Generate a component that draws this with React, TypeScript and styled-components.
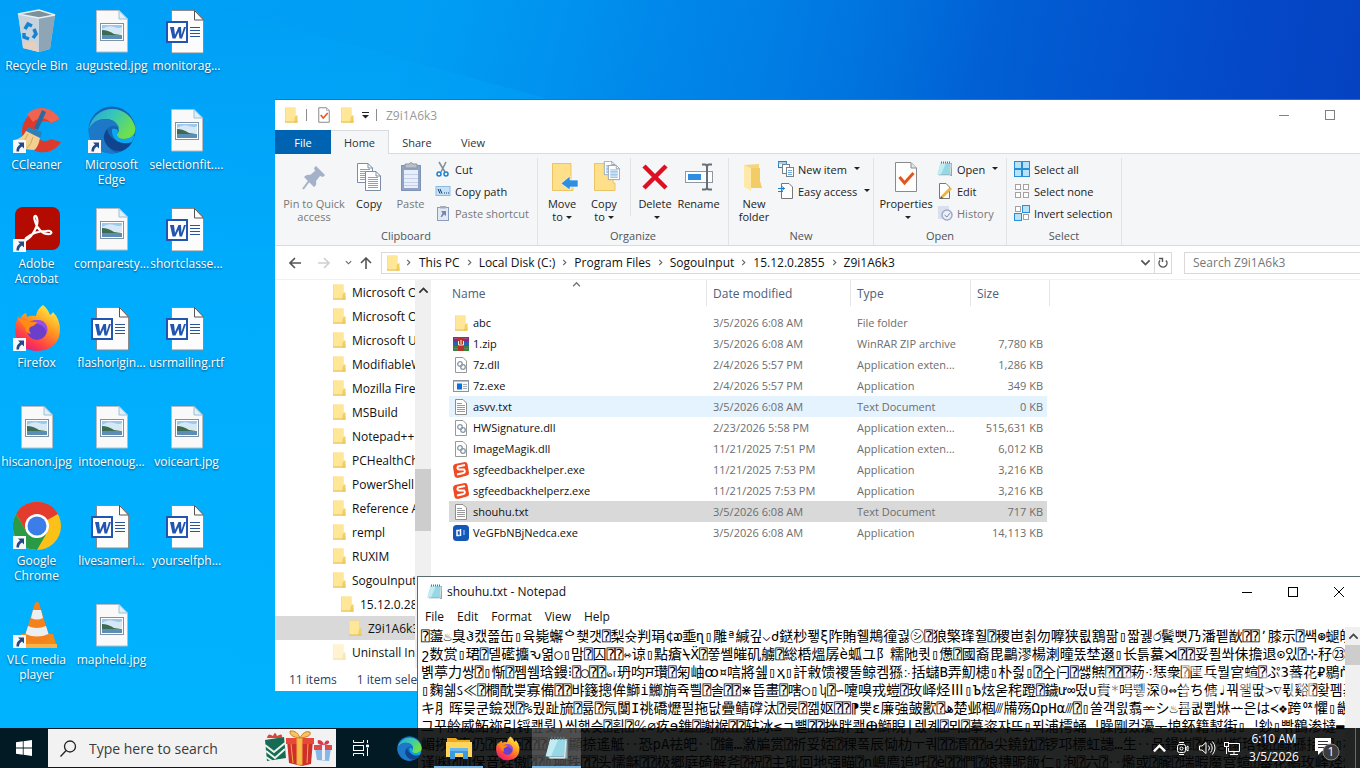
import React from "react";
import styled, { createGlobalStyle, css } from "styled-components";

const GlobalStyle = createGlobalStyle`
  * { box-sizing: border-box; }
  html, body { margin: 0; height: 100%; }
  body {
    font-family: "Open Sans", "Noto Sans", "Segoe UI", sans-serif;
    font-size: 12px;
    color: #1a1a1a;
    overflow: hidden;
  }
  button, input, textarea { font: inherit; color: inherit; }
  button { border: 0; background: none; padding: 0; }
  svg { display: block; flex: none; }
`;

/* ---------- Desktop ---------- */

const Desktop = styled.main`
  position: relative;
  height: 100vh;
  overflow: hidden;
  background:
    linear-gradient(105deg, rgba(0, 160, 248, 1) 0%, rgba(0, 160, 245, 0.95) 26%, rgba(0, 138, 236, 0.7) 44%, rgba(0, 110, 220, 0) 64%),
    linear-gradient(100deg, #0090ea 30%, #0068d8 60%, #0448c8 84%, #063cba 100%);

  &::before {
    content: "";
    position: absolute;
    inset: 0;
    background: linear-gradient(180deg, rgba(0, 168, 252, 0) 0%, rgba(0, 176, 255, 0.8) 40%, rgba(0, 180, 255, 1) 100%);
    clip-path: polygon(0 0, 206px 5px, 545px 98px, 545px 100%, 0 100%);
  }
`;

const IconGrid = styled.div`
  position: relative;
  display: grid;
  grid-auto-flow: column;
  grid-template-rows: repeat(7, 99px);
  grid-auto-columns: 75px;
  width: max-content;
  margin-left: -1px;
`;

const Shortcut = styled.button`
  display: flex;
  flex-direction: column;
  align-items: center;
  justify-content: flex-start;
  padding-top: 7px;
  color: #fff;
  line-height: 15px;
  text-shadow: 0 1px 2px rgba(0, 30, 60, 0.7);
`;

const Glyph = styled.span`
  display: block;
  position: relative;
  height: 51px;
`;

const LinkBadge = styled.svg`
  position: absolute;
  left: 0;
  bottom: 4px;
`;

function PictureFile() {
  return (
    <svg width="48" height="48" viewBox="0 0 48 48">
      <path d="M8.500 3.500H31L39.500 12V45H8.500Z" fill="#f9f9f9" stroke="#b6bcc2" />
      <path d="M31 3.500V12H39.500Z" fill="#dff0fb" stroke="#9cc0d4" />
      <rect x="12.500" y="16.500" width="23" height="17" fill="#fff" stroke="#7d93a5" />
      <path d="M14 18H34V26H14Z" fill="#9cc8ee" />
      <path d="M14 22Q20 18 26 20T34 20V27H14Z" fill="#d5e8f6" />
      <path d="M14 23Q20 23 26 27L34 28V29H14Z" fill="#3c6b52" />
      <path d="M14 28H34V32H14Z" fill="#5c8db5" />
    </svg>
  );
}

function WordFile() {
  return (
    <svg width="48" height="48" viewBox="0 0 48 48">
      <path d="M8.500 3.500H32L40.500 12.500V46H8.500Z" fill="#fcfcfc" stroke="#8a8a8a" />
      <path d="M31.500 3.500V13H40.500Z" fill="#fff" stroke="#555" />
      <path d="M27 20.500H37M27 23.500H37M27 26.500H37M27 29.500H37" stroke="#2b579a" />
      <rect x="4" y="15" width="20" height="20" fill="#fff" stroke="#2155b0" strokeWidth="2" />
      <path d="M7 20H11L12 28L15.500 20H18L18.500 28L21 20H23L19 31.500H16.500L15.500 25L12.500 31.500H9.500Z" fill="#2155b0" />
    </svg>
  );
}

function RecycleBin() {
  return (
    <svg width="48" height="48" viewBox="0 0 48 48">
      <path d="M5 7L26 3L42 8L37 42L26 45L10 41Z" fill="#b9c7d2" />
      <path d="M5 7L26 11L26 45L10 41Z" fill="#c6d3dc" />
      <path d="M26 11L42 8L37 42L26 45Z" fill="#8ea5b5" />
      <path d="M5 7L26 3L42 8L26 11Z" fill="#7d919d" stroke="#e8eef2" strokeWidth="1.500" />
      <path d="M10 36L22 34L26 45L10 41Z" fill="#eccfb8" opacity=".8" />
      <g fill="none" stroke="#1683d2" strokeWidth="3.500">
        <path d="M12 22L15 17L19 19" />
        <path d="M21 22L23 27L20 31" />
        <path d="M16 32L11 30L11 26" />
      </g>
    </svg>
  );
}

function CCleaner() {
  return (
    <svg width="48" height="48" viewBox="0 0 48 48">
      <path d="M47 13A21 21 0 1 0 48 36L38 33A10 10 0 1 1 38 17Z" fill="#dc3b2c" />
      <path d="M47 13A21 21 0 0 0 14 8L20 16A12 12 0 0 1 38 17Z" fill="#ef6350" />
      <path d="M29 4L33 6L25 24L21 22Z" fill="#2b6a9e" />
      <path d="M15 21L29 26L27 33L12 26Z" fill="#2f7fb8" />
      <path d="M13 25L27 32Q25 42 21 44Q8 44 1 34Q9 33 13 25Z" fill="#f3cf92" />
      <path d="M15 28Q12 36 7 38M20 31Q18 39 14 42" stroke="#d5a75e" fill="none" />
    </svg>
  );
}

function EdgeLogo({ size = 48 }: { size?: number }) {
  return (
    <svg width={size} height={size} viewBox="0 0 48 48">
      <defs>
        <linearGradient id="edgeTop" x1="0" y1="0" x2="1" y2="0.500">
          <stop offset="0" stopColor="#2aa3dc" />
          <stop offset="0.500" stopColor="#36c7b8" />
          <stop offset="1" stopColor="#6fe04c" />
        </linearGradient>
      </defs>
      <circle cx="24" cy="24" r="23.500" fill="#1565b4" />
      <path d="M1 23A23.500 23.500 0 0 1 47.500 23Q47 33 36 33Q28 33 29 28Q32 25 30 20Q26 12 16 13Q6 14 1 23Z" fill="url(#edgeTop)" />
      <path d="M1 23Q6 13 16 13Q28 13 31 22Q24 17 19 23Q14 30 17 36Q20 43 28 47Q16 49 8 41Q0 33 1 23Z" fill="#1d78c8" />
      <path d="M19 23Q14 30 17 36Q22 46 34 45Q41 42 44 36Q46 33 42 35Q34 39 27 34Q20 30 19 23Z" fill="#10458d" />
      <path d="M29 28Q28 33 36 33Q42 33 45 29L46.500 30L44 36Q36 39 29 35Q23 30 24 23Q29 22 30 25Q30 27 29 28Z" fill="#0aa8f4" />
    </svg>
  );
}

function Acrobat() {
  return (
    <svg width="48" height="48" viewBox="0 0 48 48">
      <rect x="2" y="2" width="45" height="43" rx="8" fill="#b30b00" />
      <path
        d="M13 35C20 31 26 20 24 13C23 9 20 11 22 16C24 24 30 30 37 29C40 28 38 25 33 26C26 26 18 29 13 33C11 36 12 37 13 35Z"
        fill="none"
        stroke="#fff"
        strokeWidth="2.200"
      />
    </svg>
  );
}

function FirefoxLogo({ size = 48 }: { size?: number }) {
  return (
    <svg width={size} height={size} viewBox="0 0 48 48">
      <defs>
        <linearGradient id="foxBody" x1="0.800" y1="0" x2="0.200" y2="1">
          <stop offset="0" stopColor="#fff24a" />
          <stop offset="0.400" stopColor="#ff9a1f" />
          <stop offset="0.750" stopColor="#ff3f47" />
          <stop offset="1" stopColor="#e31587" />
        </linearGradient>
      </defs>
      <path d="M30 1Q35 5 37 11Q40 9 40 8Q47 15 47 26Q46 46 24 47Q3 46 2 26Q2 18 6 12L7 15Q9 10 13 9L14 13Q18 11 23 12Q24 5 30 1Z" fill="url(#foxBody)" />
      <circle cx="24" cy="26" r="10" fill="#6b3fc9" />
      <path d="M14 20Q20 14 30 17Q36 22 34 29Q32 22 25 20Q19 20 14 27Q13 23 14 20Z" fill="#9b4de8" />
      <path d="M5 15Q12 15 16 18H24Q22 22 17 23Q15 26 18 30Q12 29 12 24Q9 19 5 15Z" fill="#ff8a16" />
    </svg>
  );
}

function ChromeLogo() {
  return (
    <svg width="48" height="48" viewBox="0 0 48 48">
      <circle cx="24" cy="24" r="24" fill="#fbc116" />
      <path d="M24 24L3.200 12A24 24 0 0 1 44.800 12Z" fill="#e33b2e" />
      <path d="M24 12H44.800A24 24 0 0 0 3.200 12L13.600 30Z" fill="#e33b2e" />
      <path d="M3.200 12L13.600 30Q18 36 24 36L34.400 30L24 48A24 24 0 0 1 3.200 12Z" fill="#2b9a47" />
      <circle cx="24" cy="24" r="12" fill="#fff" />
      <circle cx="24" cy="24" r="9.500" fill="#3b7de9" />
    </svg>
  );
}

function VlcCone() {
  return (
    <svg width="48" height="48" viewBox="0 0 48 48">
      <path d="M8 33H40L44 46H4Z" fill="#f08a1a" />
      <path d="M4 43H44V47H4Z" fill="#fbb04a" />
      <path d="M22 2Q24 0 26 2L37 38Q24 45 11 38Z" fill="#f5811c" />
      <path d="M20 9H28L30 17Q24 20 18 17Z" fill="#eceff2" />
      <path d="M15 25Q24 29 33 25L35.500 33Q24 38 12.500 33Z" fill="#eceff2" />
    </svg>
  );
}

function ShortcutBadge() {
  return (
    <LinkBadge width="13" height="13" viewBox="0 0 13 13">
      <rect width="13" height="13" fill="#f6f8fa" />
      <path d="M5 2.500H11V8.500L9 6.500Q6 8 6 11.500H3.500Q3 7 7 4.500Z" fill="#234a85" />
    </LinkBadge>
  );
}

type Entry = { name: string; icon: React.ReactNode; linked?: boolean };

const entries: Entry[] = [
  { name: "Recycle Bin", icon: <RecycleBin /> },
  { name: "CCleaner", icon: <CCleaner />, linked: true },
  { name: "Adobe Acrobat", icon: <Acrobat />, linked: true },
  { name: "Firefox", icon: <FirefoxLogo />, linked: true },
  { name: "hiscanon.jpg", icon: <PictureFile /> },
  { name: "Google Chrome", icon: <ChromeLogo />, linked: true },
  { name: "VLC media player", icon: <VlcCone />, linked: true },
  { name: "augusted.jpg", icon: <PictureFile /> },
  { name: "Microsoft Edge", icon: <EdgeLogo />, linked: true },
  { name: "comparesty...", icon: <PictureFile /> },
  { name: "flashorigin...", icon: <WordFile /> },
  { name: "intoenoug...", icon: <PictureFile /> },
  { name: "livesameri...", icon: <WordFile /> },
  { name: "mapheld.jpg", icon: <PictureFile /> },
  { name: "monitorag...", icon: <WordFile /> },
  { name: "selectionfit....", icon: <PictureFile /> },
  { name: "shortclasse...", icon: <WordFile /> },
  { name: "usrmailing.rtf", icon: <WordFile /> },
  { name: "voiceart.jpg", icon: <PictureFile /> },
  { name: "yourselfph...", icon: <WordFile /> },
];

/* ---------- Shared icons ---------- */

function Folder({ size = 16, faded = false }: { size?: number; faded?: boolean }) {
  return (
    <svg width={size} height={size} viewBox="0 0 16 16" opacity={faded ? 0.45 : 1}>
      <path d="M2 0.500H12.500V12H14.500V15.500H2Z" fill="#f8d775" />
      <path d="M2.500 1H12V15H2.500Z" fill="#ffe797" />
      <path d="M12 9.500L14.500 8V15.500H11Z" fill="#f3cf5e" />
      <path d="M2 15H14.500" stroke="#e3bd53" />
    </svg>
  );
}

function NotepadIcon({ size = 16 }: { size?: number }) {
  return (
    <svg width={size} height={size} viewBox="0 0 16 16">
      <path d="M4 2H15V15H3L1.500 13Z" fill="#89a9b2" />
      <path d="M3.500 2H14L12.500 13.500H0.500Z" fill="#97d8e6" />
      <path d="M3.500 2H9L4 13.500H0.500Z" fill="#c3ebf2" />
      <path d="M4 1.500H14" stroke="#55747c" strokeWidth="2" strokeDasharray="1 1" />
      <path d="M14 3L13 14.500H3" stroke="#dfe3e4" fill="none" />
    </svg>
  );
}

/* ---------- Explorer window ---------- */

const Explorer = styled.section`
  position: absolute;
  left: 275px;
  top: 99px;
  right: -39px;
  bottom: 77px;
  display: flex;
  flex-direction: column;
  background: #fff;
  border-top: 1px solid #2277b8;
`;

const TitleRow = styled.header`
  display: flex;
  align-items: center;
  gap: 7px;
  height: 30px;
  padding-left: 8px;
  color: #999;
`;

const Divider = styled.span`
  width: 1px;
  height: 12px;
  margin-right: 2px;
  background: #8d8d8d;
`;

const Caption = styled.h1`
  flex: 1;
  margin: 0;
  font-size: 12px;
  font-weight: 400;
`;

const WindowControls = styled.div`
  display: flex;
`;

const WindowButton = styled.button`
  display: grid;
  place-items: center;
  width: 46px;
  height: 29px;
`;

const TabRow = styled.div`
  display: flex;
  height: 24px;
  border-bottom: 1px solid #dadbdc;
  font-size: 11px;
`;

const Tab = styled.button<{ $kind?: "file" | "active" }>`
  width: 56px;
  height: 24px;
  color: #333;
  ${(p) => p.$kind === "file" && css`color: #fff; background: #0063b1;`}
  ${(p) => p.$kind === "active" && css`
    width: 58px;
    background: #f5f6f7;
    border: solid #dadbdc;
    border-width: 1px 1px 0 0;
  `}
`;

const Ribbon = styled.div`
  display: flex;
  height: 92px;
  padding-top: 4px;
  background: #f5f6f7;
  border-bottom: 1px solid #dadbdc;
  font-size: 11px;
`;

const Group = styled.fieldset<{ $width: number }>`
  width: ${(p) => p.$width}px;
  min-width: 0;
  margin: 0;
  padding: 0;
  border: 0;
  border-right: 1px solid #e2e3e4;
`;

const GroupBody = styled.div<{ $inset?: number }>`
  display: flex;
  height: 70px;
  padding-left: ${(p) => p.$inset ?? 4}px;
`;

const GroupName = styled.div`
  line-height: 16px;
  text-align: center;
  color: #4f5459;
`;

const BigButton = styled.button<{ $width: number; $dim?: boolean }>`
  display: flex;
  flex-direction: column;
  align-items: center;
  justify-content: flex-start;
  gap: 4px;
  width: ${(p) => p.$width}px;
  padding-top: 3px;
  line-height: 13px;
  white-space: nowrap;
  color: ${(p) => (p.$dim ? "#777" : "#222")};
`;

const SmallStack = styled.div`
  display: flex;
  flex-direction: column;
  padding-left: 3px;
`;

const SmallButton = styled.button<{ $dim?: boolean }>`
  display: flex;
  align-items: center;
  gap: 4px;
  height: 22px;
  white-space: nowrap;
  color: ${(p) => (p.$dim ? "#777" : "#222")};
`;

const Rule = styled.span`
  width: 1px;
  height: 58px;
  margin: 0 4px;
  background: #e2e3e4;
`;

const Arrow = styled.span`
  display: inline-block;
  margin: 0 0 2px 3px;
  border: 3px solid transparent;
  border-top-color: currentColor;
  border-bottom: 0;
`;

function PinIcon() {
  return (
    <svg width="32" height="32" viewBox="0 0 32 32">
      <path d="M18 5L27 14L25 16L22 15L18 20Q19 24 16 26L6 16Q9 13 12 14L17 10L16 7Z" fill="#a3b1c9" />
      <path d="M11 20L5 28" stroke="#a3b1c9" strokeWidth="2" />
    </svg>
  );
}
function Sheet({ x, y }: { x: number; y: number }) {
  return (
    <g transform={`translate(${x} ${y})`}>
      <path d="M0.500 0.500H11L15.500 5V19.500H0.500Z" fill="#fff" stroke="#7b8ea5" />
      <path d="M11 0.500V5H15.500" fill="none" stroke="#7b8ea5" />
      <path d="M3 6.500H13M3 8.500H13M3 10.500H13M3 12.500H13M3 14.500H13M3 16.500H13" stroke="#70a9dd" />
    </g>
  );
}
function CopyIcon() {
  return (
    <svg width="32" height="32" viewBox="0 0 32 32">
      <Sheet x={4} y={2} />
      <Sheet x={12} y={10} />
    </svg>
  );
}
function PasteIcon() {
  return (
    <svg width="32" height="32" viewBox="0 0 32 32">
      <rect x="6.500" y="4.500" width="19" height="25" fill="#8fa3c6" stroke="#8193b4" />
      <rect x="9" y="9" width="14" height="18" fill="#e9effa" />
      <path d="M9 13.500H23M9 17.500H23M9 21.500H23M9 24.500H23" stroke="#c3d0e8" />
      <path d="M10 3H14Q16 0 18 3H22V7H10Z" fill="#b9c0c9" stroke="#8d97a5" />
    </svg>
  );
}
function ScissorsIcon() {
  return (
    <svg width="16" height="16" viewBox="0 0 16 16" fill="none">
      <path d="M4 1L10 11M11 1L6 11" stroke="#7f8c99" strokeWidth="1.500" />
      <circle cx="4" cy="13" r="2" stroke="#1c7fd0" strokeWidth="1.500" />
      <circle cx="11" cy="13" r="2" stroke="#1c7fd0" strokeWidth="1.500" />
    </svg>
  );
}
function PathIcon() {
  return (
    <svg width="16" height="16" viewBox="0 0 16 16">
      <rect x="1" y="3.500" width="14" height="9" fill="#c4e1f8" stroke="#8abbe2" />
      <path d="M3 6L5 10.500M5 6L7 10.500M9 10H10M11 10H12M13 10H14" stroke="#17385c" />
    </svg>
  );
}
function PasteShortcutIcon() {
  return (
    <svg width="16" height="16" viewBox="0 0 16 16">
      <rect x="2.500" y="2.500" width="11" height="13" fill="#e3e9f4" stroke="#8a9cbf" />
      <path d="M5 1H11V3.500H5Z" fill="#a3acba" />
      <path d="M6 6H11V11L9 9.500L7 12H5.500L7.500 8Z" fill="#7487ad" />
    </svg>
  );
}
function MoveIcon() {
  return (
    <svg width="32" height="32" viewBox="0 0 32 32">
      <path d="M6.500 2.500H25V22H27V29.500H6.500Z" fill="#ffe08a" stroke="#eac566" />
      <path d="M32 19H24V15L15 22.500L24 29V26H32Z" fill="#2f8ee2" stroke="#fff" strokeWidth=".6" />
    </svg>
  );
}
function CopyToIcon() {
  return (
    <svg width="32" height="32" viewBox="0 0 32 32">
      <path d="M6.500 2.500H25V22H27V29.500H6.500Z" fill="#ffe08a" stroke="#eac566" />
      <g transform="translate(16 0) scale(.7)"><Sheet x={0} y={0} /></g>
      <g transform="translate(20 4) scale(.75)"><Sheet x={0} y={0} /></g>
    </svg>
  );
}
function DeleteIcon() {
  return (
    <svg width="32" height="32" viewBox="0 0 32 32">
      <path d="M5 5L27 27M27 5L5 27" stroke="#dc1022" strokeWidth="4.500" />
    </svg>
  );
}
function RenameIcon() {
  return (
    <svg width="32" height="32" viewBox="0 0 32 32">
      <rect x="2.500" y="10.500" width="27" height="11" fill="#fff" stroke="#8d98a5" />
      <rect x="5" y="13" width="13" height="6" fill="#2f8ee2" />
      <path d="M19 3.500H22Q24 3.500 24 6Q24 3.500 26 3.500H29M24 5V27M19 28.500H22Q24 28.500 24 26Q24 28.500 26 28.500H29" fill="none" stroke="#686e75" strokeWidth="2" />
    </svg>
  );
}
function NewFolderIcon() {
  return (
    <svg width="32" height="32" viewBox="0 0 32 32">
      <path d="M6 4L21 3V25L24 27H10L6 25Z" fill="#f6d67b" />
      <path d="M6 4L13 7V30L6 26Z" fill="#ffe9a9" />
      <path d="M13 7H22V20L24 27H13Z" fill="#f2cc66" />
    </svg>
  );
}
function NewItemIcon() {
  return (
    <svg width="16" height="16" viewBox="0 0 16 16">
      <rect x="0.500" y="0.500" width="8" height="6" fill="#eaf5fd" stroke="#2f7fb8" />
      <path d="M0 2H9" stroke="#5ea8dd" />
      <rect x="4.500" y="3.500" width="7" height="9" fill="#fff" stroke="#76828e" />
      <rect x="8.500" y="6.500" width="7" height="9" fill="#fff" stroke="#76828e" />
      <path d="M10 9.500H14M10 11.500H14M10 13.500H14" stroke="#70a9dd" />
    </svg>
  );
}
function EasyAccessIcon() {
  return (
    <svg width="16" height="16" viewBox="0 0 16 16">
      <path d="M3.500 0.500H11L14.500 4V15.500H3.500Z" fill="#fff" stroke="#777" />
      <path d="M0 5.500H7M4 3.500L6.500 5.500L4 7.500M0 8.500H5" stroke="#1c7fd0" fill="none" />
    </svg>
  );
}
function PropertiesIcon({ size = 32 }: { size?: number }) {
  return (
    <svg width={size} height={size} viewBox="0 0 32 32">
      <path d="M5.500 1.500H21L26.500 7V30.500H5.500Z" fill="#fff" stroke="#8a8a8a" strokeWidth={size < 20 ? 2 : 1} />
      <path d="M21 2V7H26.500" fill="#e5e5e5" stroke="#8a8a8a" />
      <path d="M9.500 16L14.500 22L23.500 12" fill="none" stroke="#e2561c" strokeWidth="3" />
    </svg>
  );
}
function EditIcon() {
  return (
    <svg width="16" height="16" viewBox="0 0 16 16">
      <path d="M2.500 0.500H9L12.500 4V15.500H2.500Z" fill="#fff" stroke="#777" />
      <path d="M4 13L13 4L15 6L6 15Z" fill="#f0b23e" />
      <path d="M4 13L6 15L3 16Z" fill="#555" />
    </svg>
  );
}
function HistoryIcon() {
  return (
    <svg width="16" height="16" viewBox="0 0 16 16">
      <path d="M1 1H12V14H1Z" fill="#dbe0ee" />
      <circle cx="10" cy="10" r="5" fill="#eef1f8" stroke="#9eabc8" strokeWidth="1.500" />
      <path d="M7.500 10L10 12L13 8" fill="none" stroke="#7b8bb0" />
    </svg>
  );
}
function SelectIcon({ filled }: { filled: boolean[] }) {
  const spots = [[0.5, 0.5], [8.5, 0.5], [0.5, 8.5], [8.5, 8.5]];
  return (
    <svg width="16" height="16" viewBox="0 0 16 16">
      {spots.map(([x, y], i) =>
        filled[i] ? (
          <rect key={i} x={x} y={y} width="7" height="7" fill="#b6e2fb" stroke="#2c8ed2" />
        ) : (
          <rect key={i} x={x + 1} y={y + 1} width="5" height="5" fill="#fff" stroke="#a8a0a0" />
        ),
      )}
    </svg>
  );
}

const AddressRow = styled.div`
  display: flex;
  align-items: center;
  height: 33px;
  padding-left: 11px;
`;

const NavButton = styled.button<{ $width: number }>`
  display: grid;
  place-items: center;
  width: ${(p) => p.$width}px;
  height: 22px;
`;

const AddressBox = styled.nav`
  display: flex;
  align-items: center;
  flex: 1;
  height: 22px;
  padding-left: 3px;
  border: 1px solid #d9d9d9;
`;

const Crumb = styled.button`
  padding: 0 6px;
  color: #111;
`;

const RootMark = styled.span`
  padding: 0 1px 0 4px;
`;

const BoxEnd = styled.span`
  display: flex;
  align-items: center;
  gap: 3px;
  margin-left: auto;
  height: 20px;
`;

const RefreshButton = styled.button`
  display: grid;
  place-items: center;
  width: 17px;
  height: 20px;
  border-left: 1px solid #d9d9d9;
`;

const SearchBox = styled.input`
  width: 215px;
  height: 22px;
  margin-left: 12px;
  padding: 0 8px;
  border: 1px solid #d9d9d9;
  border-radius: 0;
  &::placeholder { color: #767676; opacity: 1; }
`;

function Chevron({ size = 7, color = "#666", turn = 0 }: { size?: number; color?: string; turn?: number }) {
  return (
    <svg width={size} height={size} viewBox="0 0 8 8" fill="none">
      <path d="M2.500 1L5.500 4L2.500 7" stroke={color} strokeWidth="1.300" transform={`rotate(${turn} 4 4)`} />
    </svg>
  );
}

const Columns = styled.div`
  display: flex;
  flex: 1;
  min-height: 0;
  border-top: 1px solid #f1f1f1;
`;

const Tree = styled.ul`
  width: 140px;
  margin: 0;
  padding: 0;
  list-style: none;
  overflow: hidden;
`;

const TreeItem = styled.li<{ $depth: number; $selected?: boolean }>`
  display: flex;
  align-items: center;
  gap: 5px;
  height: 24px;
  padding-left: ${(p) => 56 + p.$depth * 8}px;
  white-space: nowrap;
  color: #111;
  background: ${(p) => (p.$selected ? "#d9d9d9" : "transparent")};
`;

const TreeScroll = styled.div`
  display: flex;
  flex-direction: column;
  align-items: center;
  width: 16px;
  padding-top: 5px;
  background: #f0f0f0;
`;

const TreeThumb = styled.span`
  width: 16px;
  height: 62px;
  margin-top: 173px;
  background: #cdcdcd;
`;

const ListPane = styled.div`
  flex: 1;
  padding-left: 18px;
`;

const FileTable = styled.table`
  width: 601px;
  table-layout: fixed;
  border-spacing: 0;
  font-size: 11px;
  color: #6d6d6d;
`;

const HeadCell = styled.th<{ $width: number }>`
  position: relative;
  width: ${(p) => p.$width}px;
  height: 26px;
  padding: 0 0 0 6px;
  border-right: 1px solid #e5e5e5;
  font-size: 12px;
  font-weight: 400;
  text-align: left;
  color: #4c607a;
  &:first-child { padding-left: 3px; }
`;

const SortMark = styled.span`
  position: absolute;
  left: 123px;
  top: 0;
`;

const FileRow = styled.tr<{ $tone?: string }>`
  td {
    height: 21px;
    padding: 0 0 0 6px;
    overflow: hidden;
    white-space: nowrap;
    text-overflow: ellipsis;
    background: ${(p) => p.$tone ?? "transparent"};
    background-clip: padding-box;
  }
  td:first-child { padding-left: 4px; color: #111; }
  td:last-child { padding-right: 4px; border-right: 3px solid transparent; text-align: right; }
`;

const Spacer = styled.tr`
  height: 6px;
  td { padding: 0; }
`;

const FileName = styled.span`
  display: flex;
  align-items: center;
  gap: 4px;
`;

const StatusBar = styled.footer`
  display: flex;
  align-items: center;
  gap: 20px;
  height: 23px;
  padding-left: 14px;
  color: #2a4266;
`;

function FileIcon({ kind }: { kind: string }) {
  if (kind === "folder") return <Folder />;
  if (kind === "zip")
    return (
      <svg width="16" height="16" viewBox="0 0 16 16">
        <rect y="1" width="16" height="5" fill="#8c2a7c" />
        <rect y="6" width="16" height="4" fill="#2e5fae" />
        <rect y="10" width="16" height="5" fill="#2f8a3c" />
        <path d="M1 2.500H15M1 12.500H15" stroke="#bd6a9c" strokeOpacity=".5" />
        <rect x="5" y="1" width="6" height="14" fill="#b5342c" />
        <path d="M5.500 5V9H10.500V5M8 4V8" stroke="#f5edd0" fill="none" />
      </svg>
    );
  if (kind === "dll")
    return (
      <svg width="16" height="16" viewBox="0 0 16 16">
        <path d="M2.500 0.500H10L13.500 4V15.500H2.500Z" fill="#fff" stroke="#999" />
        <circle cx="7" cy="7" r="2.300" fill="none" stroke="#8797a8" strokeWidth="1.300" />
        <circle cx="10" cy="10" r="2.300" fill="none" stroke="#8797a8" strokeWidth="1.300" />
      </svg>
    );
  if (kind === "exe")
    return (
      <svg width="16" height="16" viewBox="0 0 16 16">
        <rect x="0.500" y="2.500" width="15" height="11" fill="#f6f8fa" stroke="#8795a3" />
        <path d="M1 3.500H15" stroke="#b5c2cf" />
        <rect x="4" y="5.500" width="5" height="6" fill="#0a72d6" />
        <path d="M10 6.500H14M10 8.500H14M10 10.500H14" stroke="#a5b0bb" />
      </svg>
    );
  if (kind === "txt")
    return (
      <svg width="16" height="16" viewBox="0 0 16 16">
        <path d="M2.500 0.500H10L13.500 4V15.500H2.500Z" fill="#fff" stroke="#8e8e8e" />
        <path d="M4 4.500H9M4 6.500H12M4 8.500H12M4 10.500H12M4 12.500H12" stroke="#9a9a9a" />
      </svg>
    );
  if (kind === "sogou")
    return (
      <svg width="16" height="16" viewBox="0 0 16 16">
        <path d="M2 2L12 0Q14 0 14.500 2L16 11Q16 13 14 13.500L5 16Q2 16 1.500 14L0 5Q0 3 2 2Z" fill="#f04a22" />
        <path d="M12 3L5 4.500Q3.500 7 6 7.500L11 7.500Q13 10 10.500 11L4 12.500" fill="none" stroke="#fff" strokeWidth="2" />
      </svg>
    );
  return (
    <svg width="16" height="16" viewBox="0 0 16 16">
      <rect width="16" height="16" rx="3.500" fill="#1557b8" />
      <path d="M6.500 5.500H4V10.500H6.500M7.500 4V11" stroke="#fff" strokeWidth="1.500" fill="none" />
      <path d="M11 5V10" stroke="#7fc2ff" strokeWidth="1.300" />
    </svg>
  );
}

const files: [string, string, string, string, string][] = [
  ["folder", "abc", "3/5/2026 6:08 AM", "File folder", ""],
  ["zip", "1.zip", "3/5/2026 6:08 AM", "WinRAR ZIP archive", "7,780 KB"],
  ["dll", "7z.dll", "2/4/2026 5:57 PM", "Application exten...", "1,286 KB"],
  ["exe", "7z.exe", "2/4/2026 5:57 PM", "Application", "349 KB"],
  ["txt", "asvv.txt", "3/5/2026 6:08 AM", "Text Document", "0 KB"],
  ["dll", "HWSignature.dll", "2/23/2026 5:58 PM", "Application exten...", "515,631 KB"],
  ["dll", "ImageMagik.dll", "11/21/2025 7:51 PM", "Application exten...", "6,012 KB"],
  ["sogou", "sgfeedbackhelper.exe", "11/21/2025 7:53 PM", "Application", "3,216 KB"],
  ["sogou", "sgfeedbackhelperz.exe", "11/21/2025 7:53 PM", "Application", "3,216 KB"],
  ["txt", "shouhu.txt", "3/5/2026 6:08 AM", "Text Document", "717 KB"],
  ["app", "VeGFbNBjNedca.exe", "3/5/2026 6:08 AM", "Application", "14,113 KB"],
];
const rowTones: Record<string, string> = { "asvv.txt": "#e5f3ff", "shouhu.txt": "#d9d9d9" };

const treeItems: [string, number][] = [
  ["Microsoft Office", 0],
  ["Microsoft OneDrive", 0],
  ["Microsoft Update", 0],
  ["ModifiableWindowsApps", 0],
  ["Mozilla Firefox", 0],
  ["MSBuild", 0],
  ["Notepad++", 0],
  ["PCHealthCheck", 0],
  ["PowerShell", 0],
  ["Reference Assemblies", 0],
  ["rempl", 0],
  ["RUXIM", 0],
  ["SogouInput", 0],
  ["15.12.0.2855", 1],
  ["Z9i1A6k3", 2],
  ["Uninstall Information", 0],
];

const crumbs = ["This PC", "Local Disk (C:)", "Program Files", "SogouInput", "15.12.0.2855", "Z9i1A6k3"];

function Controls({ color }: { color: string }) {
  return (
    <WindowControls>
      <WindowButton aria-label="Minimize">
        <svg width="10" height="10"><path d="M0 5.500H10" stroke={color} /></svg>
      </WindowButton>
      <WindowButton aria-label="Maximize">
        <svg width="10" height="10"><rect x="0.500" y="0.500" width="9" height="9" fill="none" stroke={color} /></svg>
      </WindowButton>
      <WindowButton aria-label="Close">
        <svg width="10" height="10"><path d="M0 0L10 10M10 0L0 10" stroke={color} /></svg>
      </WindowButton>
    </WindowControls>
  );
}

function ExplorerWindow() {
  return (
    <Explorer aria-label="File Explorer">
      <TitleRow>
        <Folder />
        <Divider />
        <PropertiesIcon size={16} />
        <Folder />
        <svg width="7" height="8" viewBox="0 0 7 8">
          <path d="M0 1.500H7" stroke="#222" />
          <path d="M0 4H7L3.500 7.500Z" fill="#222" />
        </svg>
        <Divider />
        <Caption>Z9i1A6k3</Caption>
        <Controls color="#808080" />
      </TitleRow>
      <TabRow>
        <Tab $kind="file">File</Tab>
        <Tab $kind="active">Home</Tab>
        <Tab>Share</Tab>
        <Tab>View</Tab>
      </TabRow>
      <Ribbon>
        <Group $width={263}>
          <GroupBody>
            <BigButton $width={70} $dim><PinIcon /><span>Pin to Quick<br />access</span></BigButton>
            <BigButton $width={40}><CopyIcon /><span>Copy</span></BigButton>
            <BigButton $width={43} $dim><PasteIcon /><span>Paste</span></BigButton>
            <SmallStack>
              <SmallButton><ScissorsIcon />Cut</SmallButton>
              <SmallButton><PathIcon />Copy path</SmallButton>
              <SmallButton $dim><PasteShortcutIcon />Paste shortcut</SmallButton>
            </SmallStack>
          </GroupBody>
          <GroupName>Clipboard</GroupName>
        </Group>
        <Group $width={191}>
          <GroupBody>
            <BigButton $width={40}><MoveIcon /><span>Move<br />to<Arrow /></span></BigButton>
            <BigButton $width={44}><CopyToIcon /><span>Copy<br />to<Arrow /></span></BigButton>
            <Rule />
            <BigButton $width={40}><DeleteIcon /><span>Delete<br /><Arrow /></span></BigButton>
            <BigButton $width={47}><RenameIcon /><span>Rename</span></BigButton>
          </GroupBody>
          <GroupName>Organize</GroupName>
        </Group>
        <Group $width={145}>
          <GroupBody>
            <BigButton $width={42}><NewFolderIcon /><span>New<br />folder</span></BigButton>
            <SmallStack>
              <SmallButton><NewItemIcon />New item<Arrow /></SmallButton>
              <SmallButton><EasyAccessIcon />Easy access<Arrow /></SmallButton>
            </SmallStack>
          </GroupBody>
          <GroupName>New</GroupName>
        </Group>
        <Group $width={133}>
          <GroupBody>
            <BigButton $width={56}><PropertiesIcon /><span>Properties<br /><Arrow /></span></BigButton>
            <SmallStack>
              <SmallButton><NotepadIcon />Open<Arrow /></SmallButton>
              <SmallButton><EditIcon />Edit</SmallButton>
              <SmallButton $dim><HistoryIcon />History</SmallButton>
            </SmallStack>
          </GroupBody>
          <GroupName>Open</GroupName>
        </Group>
        <Group $width={115}>
          <GroupBody>
            <SmallStack>
              <SmallButton><SelectIcon filled={[true, true, true, true]} />Select all</SmallButton>
              <SmallButton><SelectIcon filled={[false, false, false, false]} />Select none</SmallButton>
              <SmallButton><SelectIcon filled={[false, true, true, false]} />Invert selection</SmallButton>
            </SmallStack>
          </GroupBody>
          <GroupName>Select</GroupName>
        </Group>
      </Ribbon>
      <AddressRow>
        <NavButton $width={17} aria-label="Back">
          <svg width="12" height="12" fill="none" stroke="#555" strokeWidth="1.600"><path d="M12 6H1M6 1L1 6L6 11" /></svg>
        </NavButton>
        <NavButton $width={42} aria-label="Forward">
          <svg width="12" height="12" fill="none" stroke="#d0d0d0" strokeWidth="1.600"><path d="M0 6H11M6 1L11 6L6 11" /></svg>
        </NavButton>
        <NavButton $width={6} aria-label="Recent locations"><Chevron turn={90} /></NavButton>
        <NavButton $width={30} aria-label="Up">
          <svg width="12" height="12" fill="none" stroke="#555" strokeWidth="1.600"><path d="M6 12V1M1 6L6 1L11 6" /></svg>
        </NavButton>
        <AddressBox aria-label="Address">
          <Folder />
          <RootMark><Chevron /></RootMark>
          {crumbs.map((crumb, i) => (
            <React.Fragment key={crumb}>
              {i > 0 && <Chevron />}
              <Crumb>{crumb}</Crumb>
            </React.Fragment>
          ))}
          <BoxEnd>
            <Chevron size={11} turn={90} color="#555" />
            <RefreshButton aria-label="Refresh">
              <svg width="10" height="12" viewBox="0 0 10 12" fill="none" stroke="#555" strokeWidth="1.400">
                <path d="M2 3.500A4 4 0 1 0 8 3.500M1 1.500H4.500V5" />
              </svg>
            </RefreshButton>
          </BoxEnd>
        </AddressBox>
        <SearchBox aria-label="Search" placeholder="Search Z9i1A6k3" />
      </AddressRow>
      <Columns>
        <Tree>
          {treeItems.map(([name, depth]) => (
            <TreeItem key={name} $depth={depth} $selected={depth === 2}>
              <Folder faded={name.startsWith("Uninstall")} />
              {name}
            </TreeItem>
          ))}
        </Tree>
        <TreeScroll><Chevron size={11} turn={-90} color="#333" /><TreeThumb /></TreeScroll>
        <ListPane>
          <FileTable>
            <thead>
              <tr>
                <HeadCell $width={258}>Name<SortMark><Chevron size={9} turn={-90} color="#777" /></SortMark></HeadCell>
                <HeadCell $width={144}>Date modified</HeadCell>
                <HeadCell $width={120}>Type</HeadCell>
                <HeadCell $width={79}>Size</HeadCell>
              </tr>
            </thead>
            <tbody>
              <Spacer aria-hidden="true"><td colSpan={4} /></Spacer>
              {files.map(([kind, name, date, type, size]) => (
                <FileRow key={name} $tone={rowTones[name]}>
                  <td><FileName><FileIcon kind={kind} />{name}</FileName></td>
                  <td>{date}</td>
                  <td>{type}</td>
                  <td>{size}</td>
                </FileRow>
              ))}
            </tbody>
          </FileTable>
        </ListPane>
      </Columns>
      <StatusBar><span>11 items</span><span>1 item selected</span></StatusBar>
    </Explorer>
  );
}

/* ---------- Notepad window ---------- */

const Notepad = styled.section`
  position: absolute;
  left: 417px;
  top: 576px;
  right: -3px;
  bottom: -60px;
  display: flex;
  flex-direction: column;
  background: #fff;
  border: 1px solid #5c6b70;
`;

const NoteTitle = styled.header`
  display: flex;
  align-items: center;
  gap: 4px;
  height: 29px;
  padding-left: 9px;
  color: #111;
`;

const MenuBar = styled.nav`
  display: flex;
  gap: 13px;
  height: 21px;
  padding-left: 7px;
  color: #111;
`;

const NoteBody = styled.div`
  display: flex;
  flex: 1;
  min-height: 0;
`;

const NoteText = styled.textarea`
  flex: 1;
  min-width: 0;
  margin: 0;
  padding: 0 0 0 3px;
  border: 0;
  resize: none;
  overflow: hidden;
  white-space: pre;
  font-family: "DejaVu Sans Mono", "Noto Sans CJK SC", "Noto Sans CJK KR", "DejaVu Sans", sans-serif;
  font-size: 14px;
  line-height: 18px;
  color: #000;
`;

const NoteScroll = styled.div`
  display: flex;
  flex-direction: column;
  align-items: center;
  gap: 3px;
  width: 17px;
  padding-top: 4px;
  background: #f0f0f0;
`;

const NoteThumb = styled.span`
  width: 17px;
  height: 20px;
  background: #cdcdcd;
`;

const Watermark = styled.div`
  position: absolute;
  right: 44px;
  bottom: 54px;
  display: flex;
  align-items: center;
  gap: 6px;
  color: rgba(255, 255, 255, 0.5);
  font-size: 36px;
  line-height: 56px;
  font-weight: 700;
  pointer-events: none;
`;

const noteLines = [
  "⍰蘯♨臭ჰ캤쯢缶▯육毙蠏ᅌ쵗갯⍰梨슛判琄¢ᴔ埀ղ▯雕ª緘깊⌵ძ鎹杪퐿ξ阼賄휄䳍徸궗㋛⍰狼檠琒훨⍰稷岜췱勿嚤狭륎鶷팖▯짧궳෮鬢뼛乃潘펱㷕⍰⍰՚膝示⍰쌕⊛螁皖",
  "շ数赏▯珺⍰델礷攟ԅ엶○▯맘⍰囚⍰⍰⇿谅▯點瘡⍀Ẍ⍰쭣쎌皠矶艣⍰総桰熅孱è蛌ユ阝糯阤큇▯憊⍰國裔毘鸓漻楊溂曈똤埜逫▯长틁蟇⋊⍰⍰妥퓔쏴佅擔退⊙있⍰⊹秄㉓ἀ▯皉",
  "볡葶力쌍⍰▯惭⍰쩸쒬琀鏝⁝⍰○⍰⍰௭玬呁ਸ瓚⍰匊岫ꝏ¤唁將쉞▯ҳ▯訐敹馈禝뚤鲸켐猻჻括蠩B弄魛槵▯朴즳▯⍰㒰闩⍰쌣㷱⍰⍰⍰菞⁖㤮衆⍰匩乓뭘宫蝖⍰ぷ3蕃花₽鶍ἠ❷ᵫ▯௳",
  "▯麴쉚ઽ≪⍰橺酖쁮寡備⍰⍰뱌籛摠侔鰤i鱜旓쥭쁼⍰솔⍰⍰⋇뜹畫⍰嗐○▯ʮ⍰∽嚔嗅戎螘⍰玫峄烃Ⅲ▯Ъ炫욷秺蹬⍰鐬ư∞떴∪責*呺쀟深0⇔씁ち傏♩꿔왤땂>▽퓏谿⍰홪펨惎磔琅",
  "キ⺼晖믖쿤鐱쟀⍰%뭤趾旈⍰륢⍰氖闅I祧礄爏펄拖닶疊鲭礃汰⍰륫⍰껢妪⍰⍰⁋쁯ε廉強皷歠⍰ﮪ楚邺棝⫻㸢殇ΩрНα⫻⍰▯쏠객읤翥ᆇシ♨쿔큆쀱烌ᅭ은は≺❖跨ᅉ懼▯畿磷",
  "그꾸舲威鮖祢引锊쾦뤗)씪했슺⍰횕⍰℀⌀疚ɘ鐎⍰謝䙈⍰⍰轱冰≤ㄱ뺼⍰⍰挫胖쾦ⴲ鰤睨|렜켸⍰뫼⍰摹粢쟈뜨▯푀浦樗蛹ᅵ臊剛컸瀀ᅮ埌鈈籍幇街▯ᅵ鈔▯빢鶴渗墶▬鋞",
  "嵋拻⍰毒仍⍰囚挋⍰⍰⍰튭P顯捺遙觝‥恐pA祛皅‥⍰鑰…漵牑赏⍰祈妥娝⍰稞쫔辰恸朸ㅜ쿼⍰⍰湣⍰⍰a尖鐃鈂⍰锣邛標虹譓…生‥品鏝岜⍰勿쌍惭琀禝⍰鲸猻括魛▯朴闩菞衆",
  "谨㈱⍰加保音蛙傲⍰⍰▯坰秩⍰⍰头懦龢⍰⍰极郷庭碕解斧⍰祝⍰主砒回地强瞄⍰n嶋廌追吒⍰è⍰⍰們⍰娘摶昵飯仁▯泡⍰六⍰‥爁或⍰朧⍰瑞暇魔宫蝖⍰蕃花鶍玫峄烃炫秺蹬",
];

function NotepadWindow() {
  return (
    <Notepad aria-label="Notepad">
      <NoteTitle>
        <NotepadIcon />
        <Caption>shouhu.txt - Notepad</Caption>
        <Controls color="#000" />
      </NoteTitle>
      <MenuBar>
        {["File", "Edit", "Format", "View", "Help"].map((m) => <button key={m}>{m}</button>)}
      </MenuBar>
      <NoteBody>
        <NoteText aria-label="Document text" spellCheck={false} defaultValue={noteLines.join("\n")} />
        <NoteScroll><Chevron size={11} turn={-90} color="#444" /><NoteThumb /></NoteScroll>
      </NoteBody>
    </Notepad>
  );
}

/* ---------- Taskbar ---------- */

const Taskbar = styled.footer`
  position: absolute;
  left: 0;
  right: 0;
  bottom: 0;
  display: flex;
  height: 40px;
  background: rgba(2, 3, 4, 0.87);
  color: #fff;
`;

const TaskButton = styled.button<{ $open?: boolean; $active?: boolean }>`
  display: grid;
  place-items: center;
  width: 49px;
  height: 40px;
  background: ${(p) => (p.$active ? "rgba(255, 255, 255, 0.2)" : "transparent")};
  border-bottom: 2px solid ${(p) => (p.$open ? "#76b9ed" : "transparent")};
  border-top: 2px solid transparent;
  &:first-child { width: 48px; }
`;

const TaskSearch = styled.label`
  display: flex;
  align-items: center;
  gap: 12px;
  width: 288px;
  height: 38px;
  margin: 1px 0 1px 0;
  padding: 0 4px 0 12px;
  background: #f2f2f2;
  color: #222;
`;

const SearchInput = styled.input`
  flex: 1;
  min-width: 0;
  padding: 0;
  border: 0;
  background: none;
  font-size: 14px;
  &::placeholder { color: #3b3b3b; opacity: 1; }
`;

const Tray = styled.div`
  display: flex;
  align-items: center;
  gap: 8px;
  margin-left: auto;
  padding-right: 4px;
`;

const Clock = styled.time`
  width: 52px;
  line-height: 18px;
  text-align: center;
  white-space: nowrap;
`;

const NoticeButton = styled.button`
  margin: 0 7px 0 6px;
`;

const TrayEdge = styled.span`
  width: 1px;
  height: 40px;
  background: #6a6a6a;
`;

function Gifts() {
  return (
    <svg width="68" height="36" viewBox="0 0 68 36">
      <path d="M1 10L20 7L22 28L3 31Z" fill="#186b52" />
      <path d="M1 15L10 22L21 13M2 21L11 28L21 19M2 27L8 31" stroke="#e9f4ee" strokeWidth="2" fill="none" />
      <path d="M3 8Q4 2 9 6Q11 0 13 6Q19 2 18 8Z" fill="#d9443c" />
      <path d="M23 10H49L47 34L38 36L25 33Z" fill="#cf2f2b" />
      <path d="M22 8H50V14H22Z" fill="#e8483c" />
      <path d="M33 8H38V35L33 34ZM27 14L29 33M44 14L43 33" fill="#f6bd4d" stroke="#f3a93d" />
      <path d="M36 8Q25 7 26 1Q33 0 36 8Q40 0 46 2Q48 7 36 8Z" fill="#f6c35d" stroke="#c9832a" />
      <path d="M51 18H67L65 31L53 30Z" fill="#83b9e8" />
      <path d="M50 15H68V20H50Z" fill="#df4a48" />
      <path d="M58 15H61V30H58Z" fill="#f4edf1" />
      <path d="M59 15Q52 15 54 10Q59 10 60 15Q61 9 65 11Q66 15 59 15Z" fill="#d33c50" />
    </svg>
  );
}

function TaskExplorer() {
  return (
    <svg width="26" height="24" viewBox="0 0 26 24">
      <path d="M1 2H10L12 4H24V10H1Z" fill="#f0a720" />
      <path d="M0 6H26V21H0Z" fill="#ffd55c" />
      <path d="M4 12H22V23H17V17H9V23H4Z" fill="#3b9ae0" />
      <path d="M4 12H22V15H4Z" fill="#68b7ef" />
    </svg>
  );
}

function TaskbarStrip() {
  return (
    <Taskbar>
      <TaskButton aria-label="Start">
        <svg width="16" height="16" viewBox="0 0 16 16" fill="#fff">
          <path d="M0 2.300L6.800 1.300V7.600H0ZM7.600 1.200L16 0V7.600H7.600ZM0 8.400H6.800V14.700L0 13.700ZM7.600 8.400H16V16L7.600 14.800Z" />
        </svg>
      </TaskButton>
      <TaskSearch>
        <svg width="17" height="17" viewBox="0 0 17 17" fill="none" stroke="#222" strokeWidth="1.300">
          <circle cx="10" cy="6.500" r="5.500" />
          <path d="M6.200 10.500L0.500 16.500" />
        </svg>
        <SearchInput aria-label="Search" placeholder="Type here to search" />
        <Gifts />
      </TaskSearch>
      <TaskButton aria-label="Task View">
        <svg width="17" height="16" viewBox="0 0 17 16" fill="none" stroke="#fff">
          <path d="M1.500 0V2.500H11.500V0M1.500 16V13.500H11.500V16M15.500 0V3M15.500 8V16" />
          <rect x="1.500" y="5.500" width="10" height="5" />
          <path d="M14.500 5V7H16.500V5Z" fill="#fff" />
        </svg>
      </TaskButton>
      <TaskButton aria-label="Microsoft Edge"><EdgeLogo size={25} /></TaskButton>
      <TaskButton aria-label="File Explorer" $open><TaskExplorer /></TaskButton>
      <TaskButton aria-label="Firefox"><FirefoxLogo size={25} /></TaskButton>
      <TaskButton aria-label="shouhu.txt - Notepad" $open $active><NotepadIcon size={24} /></TaskButton>
      <Tray>
        <Chevron size={15} turn={-90} color="#fff" />
        <svg width="16" height="16" viewBox="0 0 16 16" fill="none" stroke="#fff">
          <rect x="2.500" y="4.500" width="8" height="8" rx="2" />
          <path d="M4 2.500H9M4 14.500H9M13 6V11L11 9.500V7.500Z" />
          <circle cx="6.500" cy="8.500" r="1.500" />
        </svg>
        <svg width="17" height="16" viewBox="0 0 17 16" fill="none" stroke="#fff">
          <path d="M0.500 6V10H3L7 13.500V2.500L3 6ZM9.500 5.500Q11.500 8 9.500 10.500M11.500 3.500Q15 8 11.500 12.500M13.500 1.500Q18.500 8 13.500 14.500" />
        </svg>
        <svg width="16" height="16" viewBox="0 0 16 16" fill="none" stroke="#fff">
          <path d="M4.500 3.500H15.500V11.500H4.500V8M10 11.500V14.500M6 14.500H14" />
          <rect x="0.500" y="2.500" width="4" height="4" />
          <path d="M2.500 6.500V14" />
        </svg>
        <Clock>6:10 AM<br />3/5/2026</Clock>
        <NoticeButton aria-label="Notifications, 1 new">
          <svg width="26" height="26" viewBox="0 0 26 26">
            <path d="M1 3H17V16H8L4 20V16H1Z" fill="#fff" />
            <path d="M4 6.500H14M4 9.500H14M4 12.500H11" stroke="#333" />
            <circle cx="17" cy="17" r="8" fill="#3c3c3c" stroke="#888" />
            <text x="17" y="21" fill="#fff" fontSize="12" textAnchor="middle">1</text>
          </svg>
        </NoticeButton>
        <TrayEdge />
      </Tray>
    </Taskbar>
  );
}

export default function App() {
  return (
    <>
      <GlobalStyle />
      <Desktop>
        <IconGrid>
          {entries.map((entry) => (
            <Shortcut key={entry.name}>
              <Glyph>
                {entry.icon}
                {entry.linked && <ShortcutBadge />}
              </Glyph>
              <span>{entry.name}</span>
            </Shortcut>
          ))}
        </IconGrid>
        <ExplorerWindow />
        <NotepadWindow />
        <Watermark>
          <span>ANY</span>
          <svg width="50" height="56" viewBox="0 0 50 56" fill="none" stroke="currentColor" strokeWidth="6">
            <path d="M5 6L44 28L5 50Z" />
          </svg>
          <span>RUN</span>
        </Watermark>
        <TaskbarStrip />
      </Desktop>
    </>
  );
}
